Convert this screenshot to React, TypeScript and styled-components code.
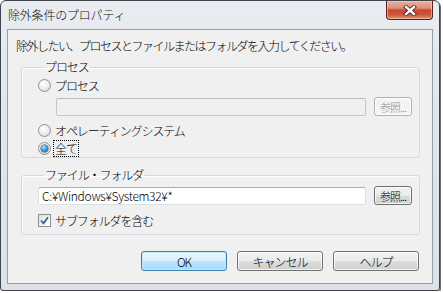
import styled, { createGlobalStyle } from "styled-components";

const GlobalStyle = createGlobalStyle`
  html, body {
    margin: 0;
    background: #ffffff;
  }
  body {
    font-family: "Noto Sans CJK JP", "Noto Sans", sans-serif;
    font-size: 12px;
    font-weight: 300;
    color: #000000;
  }
`;

const Window = styled.div`
  box-sizing: border-box;
  width: 440px;
  height: 291px;
  display: flex;
  flex-direction: column;
  padding: 0 6px 6px 6px;
  border: 1px solid #3f454c;
  border-radius: 6px 6px 3px 3px;
  background: linear-gradient(to bottom, #e9edf1 0%, #e1e6eb 40%, #dde2e8 100%);
  box-shadow: 1px 1px 0 #6b7075;
`;

const TitleBar = styled.div`
  height: 28px;
  display: flex;
  justify-content: space-between;
  align-items: flex-start;
`;

const Title = styled.span`
  padding-left: 1px;
  line-height: 28px;
  font-size: 12px;
  letter-spacing: -0.2px;
  color: #101010;
`;

const CloseButton = styled.div`
  box-sizing: border-box;
  width: 47px;
  height: 19px;
  display: flex;
  align-items: center;
  justify-content: center;
  border: 1px solid #5c2018;
  border-top: none;
  border-radius: 0 0 4px 4px;
  background: linear-gradient(
    to bottom,
    #eab0a0 0%,
    #dc8f7b 40%,
    #c8492f 50%,
    #c9553c 75%,
    #e2906f 100%
  );
  box-shadow: inset 0 0 0 1px rgba(255, 220, 210, 0.5);
`;

const Client = styled.div`
  flex: 1;
  display: flex;
  flex-direction: column;
  border: 1px solid #96a0aa;
  background: #f0f0f0;
  padding: 8px 12px 0 13px;
`;

const Instruction = styled.div`
  margin-left: -5px;
  line-height: 16px;
  letter-spacing: -1.5px;
`;

const Group = styled.fieldset<{ $gap: number; $bottom: number }>`
  margin: ${(p) => p.$gap}px 0 0 0;
  padding: 0 0 ${(p) => p.$bottom}px 16px;
  border: 1px solid #d5d9dd;
  border-radius: 3px;
  box-shadow: inset 1px 1px 0 #ffffff;
  display: flex;
  flex-direction: column;
`;

const Legend = styled.legend`
  margin-left: 6px;
  padding: 0 1px;
  line-height: 16px;
  letter-spacing: -1.1px;
`;

const Row = styled.div<{ $top: number }>`
  height: 18px;
  margin-top: ${(p) => p.$top}px;
  display: flex;
  align-items: center;
  gap: 3px;
`;

const Label = styled.span<{ $focus?: boolean }>`
  line-height: 15px;
  letter-spacing: -1.1px;
  padding: 0 1px;
  outline: ${(p) => (p.$focus ? "1px dotted #000" : "none")};
`;

const RadioCircle = styled.span<{ $checked?: boolean }>`
  box-sizing: border-box;
  width: 13px;
  height: 13px;
  border-radius: 50%;
  border: 1px solid #8e9194;
  background: radial-gradient(circle at 40% 35%, #ffffff 0%, #eeeeee 45%, #cfd0d1 100%);
  display: flex;
  align-items: center;
  justify-content: center;
  flex-shrink: 0;

  &::after {
    content: "";
    display: ${(p) => (p.$checked ? "block" : "none")};
    width: 7px;
    height: 7px;
    border-radius: 50%;
    background: radial-gradient(circle at 40% 35%, #b8ecff 0%, #3f9ad3 45%, #0f4c84 100%);
    box-shadow: 0 0 0 0.5px #174a78;
  }
`;

const CheckBox = styled.span`
  box-sizing: border-box;
  width: 13px;
  height: 13px;
  border: 1px solid #8e9194;
  background: linear-gradient(135deg, #dcdcdc 0%, #f4f4f4 60%, #ffffff 100%);
  display: flex;
  align-items: center;
  justify-content: center;
  flex-shrink: 0;
`;

const InputRow = styled.div<{ $top: number; $indent: number }>`
  height: 19px;
  margin-top: ${(p) => p.$top}px;
  margin-left: ${(p) => p.$indent}px;
  margin-right: 7px;
  display: flex;
  align-items: center;
  gap: 8px;
`;

const TextBox = styled.div<{ $disabled?: boolean }>`
  box-sizing: border-box;
  flex: 1;
  height: 18px;
  padding: 0 3px;
  line-height: 16px;
  font-size: 12px;
  letter-spacing: -0.3px;
  border: 1px solid ${(p) => (p.$disabled ? "#c4c6c8" : "#dbdfe6")};
  border-top-color: ${(p) => (p.$disabled ? "#b9bbbd" : "#abadb3")};
  border-radius: 2px;
  background: ${(p) => (p.$disabled ? "#f0f0f0" : "#ffffff")};
`;

const SmallButton = styled.div<{ $disabled?: boolean }>`
  box-sizing: border-box;
  width: 38px;
  height: 19px;
  display: flex;
  align-items: center;
  justify-content: center;
  font-size: 11px;
  letter-spacing: -0.8px;
  color: ${(p) => (p.$disabled ? "#8d8d8d" : "#000000")};
  border: 1px solid ${(p) => (p.$disabled ? "#adb2b5" : "#707070")};
  border-radius: 3px;
  background: ${(p) =>
    p.$disabled
      ? "#f4f4f4"
      : "linear-gradient(to bottom, #f2f2f2 0%, #ebebeb 50%, #dddddd 51%, #cfcfcf 100%)"};
  box-shadow: inset 0 0 0 1px rgba(255, 255, 255, 0.7);
`;

const ButtonBar = styled.div`
  margin: 16px 1px 0 0;
  display: flex;
  justify-content: flex-end;
  gap: 10px;
`;

const DialogButton = styled.div<{ $default?: boolean }>`
  box-sizing: border-box;
  width: 86px;
  height: 20px;
  display: flex;
  align-items: center;
  justify-content: center;
  letter-spacing: -1px;
  border: 1px solid ${(p) => (p.$default ? "#3c7fb1" : "#707070")};
  border-radius: 3px;
  background: ${(p) =>
    p.$default
      ? "linear-gradient(to bottom, #eaf6fd 0%, #d9f0fc 50%, #bee6fd 51%, #a7d9f5 100%)"
      : "linear-gradient(to bottom, #f2f2f2 0%, #ebebeb 50%, #dddddd 51%, #cfcfcf 100%)"};
  box-shadow: inset 0 0 0 1px ${(p) => (p.$default ? "#c8e9fa" : "rgba(255,255,255,0.75)")};
`;

const CloseGlyph = () => (
  <svg width="14" height="11" viewBox="0 0 14 11">
    <path d="M3 2 L11 9 M11 2 L3 9" stroke="#4a1a14" strokeWidth="4" strokeLinecap="square" />
    <path d="M3 2 L11 9 M11 2 L3 9" stroke="#ffffff" strokeWidth="2.4" strokeLinecap="square" />
  </svg>
);

const CheckMark = () => (
  <svg width="9" height="9" viewBox="0 0 9 9">
    <path d="M1 4.5 L3.5 7.3 L8 1.2" stroke="#3c5aa0" strokeWidth="1.7" fill="none" />
  </svg>
);

export default function App() {
  return (
    <>
      <GlobalStyle />
      <Window>
        <TitleBar>
          <Title>除外条件のプロパティ</Title>
          <CloseButton>
            <CloseGlyph />
          </CloseButton>
        </TitleBar>
        <Client>
          <Instruction>除外したい、プロセスとファイルまたはフォルダを入力してください。</Instruction>
          <Group $gap={5} $bottom={0}>
            <Legend>プロセス</Legend>
            <Row $top={1}>
              <RadioCircle />
              <Label>プロセス</Label>
            </Row>
            <InputRow $top={3} $indent={18}>
              <TextBox $disabled />
              <SmallButton $disabled>参照...</SmallButton>
            </InputRow>
            <Row $top={5}>
              <RadioCircle />
              <Label>オペレーティングシステム</Label>
            </Row>
            <Row $top={0}>
              <RadioCircle $checked />
              <Label $focus>全て</Label>
            </Row>
          </Group>
          <Group $gap={9} $bottom={5}>
            <Legend>ファイル・フォルダ</Legend>
            <InputRow $top={3} $indent={0}>
              <TextBox>C:¥Windows¥System32¥*</TextBox>
              <SmallButton>参照...</SmallButton>
            </InputRow>
            <Row $top={6}>
              <CheckBox>
                <CheckMark />
              </CheckBox>
              <Label>サブフォルダを含む</Label>
            </Row>
          </Group>
          <ButtonBar>
            <DialogButton $default>OK</DialogButton>
            <DialogButton>キャンセル</DialogButton>
            <DialogButton>ヘルプ</DialogButton>
          </ButtonBar>
        </Client>
      </Window>
    </>
  );
}
